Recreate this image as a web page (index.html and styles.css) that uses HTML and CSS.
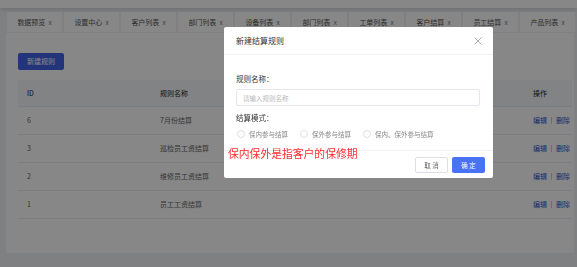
FILE: index.html
```html
<!DOCTYPE html>
<html lang="zh-CN">
<head>
    <meta charset="UTF-8">
    <meta name="viewport" content="width=device-width, initial-scale=1.0">
    <title>结算规则</title>
    <link rel="stylesheet" href="styles.css">
</head>
<body>
    <div class="topbar"></div>

    <div class="tabs">
        <div class="tab">数据预览 <span class="tab-x">x</span></div>
        <div class="tab">设置中心 <span class="tab-x">x</span></div>
        <div class="tab">客户列表 <span class="tab-x">x</span></div>
        <div class="tab">部门列表 <span class="tab-x">x</span></div>
        <div class="tab">设备列表 <span class="tab-x">x</span></div>
        <div class="tab">部门列表 <span class="tab-x">x</span></div>
        <div class="tab">工单列表 <span class="tab-x">x</span></div>
        <div class="tab">客户结算 <span class="tab-x">x</span></div>
        <div class="tab">员工结算 <span class="tab-x">x</span></div>
        <div class="tab">产品列表 <span class="tab-x">x</span></div>
    </div>

    <div class="panel">
        <button class="btn-primary">新建规则</button>

        <div class="table">
            <div class="row head">
                <div class="cell">ID</div>
                <div class="cell">规则名称</div>
                <div class="cell">操作</div>
            </div>
            <div class="row">
                <div class="cell">6</div>
                <div class="cell">7月份结算</div>
                <div class="cell ops"><a>编辑</a><span class="sep"></span><a>删除</a></div>
            </div>
            <div class="row">
                <div class="cell">3</div>
                <div class="cell">巡检员工资结算</div>
                <div class="cell ops"><a>编辑</a><span class="sep"></span><a>删除</a></div>
            </div>
            <div class="row">
                <div class="cell">2</div>
                <div class="cell">维修员工资结算</div>
                <div class="cell ops"><a>编辑</a><span class="sep"></span><a>删除</a></div>
            </div>
            <div class="row">
                <div class="cell">1</div>
                <div class="cell">员工工资结算</div>
                <div class="cell ops"><a>编辑</a><span class="sep"></span><a>删除</a></div>
            </div>
        </div>
    </div>

    <div class="mask"></div>

    <div class="modal">
        <div class="modal-header">
            <span class="modal-title">新建结算规则</span>
            <svg class="modal-close" width="8" height="8" viewBox="0 0 8 8">
                <path d="M0.5 0.5 L7.5 7.5 M7.5 0.5 L0.5 7.5" stroke="#999" stroke-width="0.8" fill="none"/>
            </svg>
        </div>
        <div class="modal-body">
            <div class="form-label">规则名称：</div>
            <input class="form-input" type="text" placeholder="请输入规则名称">
            <div class="form-label second">结算模式：</div>
            <div class="radios">
                <label class="radio"><span class="radio-dot"></span>保内参与结算</label>
                <label class="radio"><span class="radio-dot"></span>保外参与结算</label>
                <label class="radio"><span class="radio-dot"></span>保内、保外参与结算</label>
            </div>
        </div>
        <div class="modal-footer">
            <button class="btn-default">取 消</button>
            <button class="btn-ok">确 定</button>
        </div>
    </div>

    <div class="note">保内保外是指客户的保修期</div>
</body>
</html>
```

FILE: styles.css
```css
body {
    margin: 0;
    padding: 0;
    background-color: #f0f1f4;
    font-family: "Noto Sans CJK SC", "Noto Sans", sans-serif;
    color: #333;
    width: 577px;
    height: 267px;
    overflow: hidden;
}

.topbar {
    height: 8px;
    background-color: #fff;
    box-shadow: 0 2px 4px rgba(0, 0, 0, 0.12);
}

.tabs {
    display: flex;
    gap: 2px;
    margin-top: 4px;
    padding-left: 7px;
}

.tab {
    width: 55px;
    height: 20px;
    flex-shrink: 0;
    background-color: #fff;
    display: flex;
    align-items: center;
    justify-content: center;
    font-size: 7px;
    color: #555;
    gap: 3px;
}

.tab-x {
    font-family: "Liberation Sans", sans-serif;
    font-size: 6.5px;
    color: #777;
}

.panel {
    margin: 1px 3px 0 6px;
    height: 220px;
    background-color: #fff;
    padding: 12px 2px 0 12px;
    box-sizing: border-box;
}

.btn-primary {
    width: 46px;
    height: 17px;
    border: none;
    border-radius: 2px;
    background-color: #4463e6;
    color: #fff;
    font-family: inherit;
    font-size: 7px;
    padding: 0;
}

.table {
    margin-top: 10px;
}

.row {
    display: grid;
    grid-template-columns: 142px 1fr 39px;
    height: 28px;
    align-items: center;
    border-bottom: 1px solid #ebedf2;
    box-sizing: border-box;
    font-size: 7px;
    color: #666;
}

.row.head {
    height: 27px;
    background-color: #f6f7f9;
    color: #222;
}

.row .cell:first-child {
    padding-left: 9px;
}

.ops {
    display: flex;
    align-items: center;
}

.ops a {
    color: #2f4fd0;
}

.sep {
    width: 1px;
    height: 7px;
    background-color: #ccd;
    margin: 0 4px;
}

.mask {
    position: fixed;
    inset: 0;
    background-color: rgba(0, 0, 0, 0.47);
}

.modal {
    position: absolute;
    left: 224px;
    top: 27px;
    width: 269px;
    height: 151px;
    background-color: #fff;
    border-radius: 2px;
    display: flex;
    flex-direction: column;
}

.modal-header {
    height: 27px;
    border-bottom: 1px solid #eef0f3;
    display: flex;
    align-items: center;
    justify-content: space-between;
    padding: 0 11px 0 12px;
    box-sizing: content-box;
}

.modal-title {
    font-size: 8px;
    color: #333;
}

.modal-body {
    flex: 1;
    padding: 18px 13px 0 12px;
}

.form-label {
    font-size: 7.5px;
    line-height: 12px;
    color: #333;
}

.form-label.second {
    margin-top: 6px;
}

.form-input {
    display: block;
    width: 100%;
    height: 17px;
    margin-top: 4px;
    box-sizing: border-box;
    border: 1px solid #e4e6eb;
    border-radius: 2px;
    padding: 0 6px;
    font-family: inherit;
    font-size: 6.5px;
    outline: none;
}

.form-input::placeholder {
    color: #b8b8b8;
}

.radios {
    display: flex;
    gap: 11px;
    margin-top: 4px;
    height: 12px;
    align-items: center;
}

.radio {
    display: flex;
    align-items: center;
    gap: 4px;
    font-size: 6.5px;
    color: #888;
}

.radio-dot {
    width: 8px;
    height: 8px;
    border: 1px solid #dcdfe6;
    border-radius: 50%;
    box-sizing: border-box;
    margin-left: 1px;
}

.modal-footer {
    height: 27px;
    border-top: 1px solid #eef0f3;
    display: flex;
    justify-content: flex-end;
    align-items: center;
    gap: 4px;
    padding-right: 8px;
}

.btn-default, .btn-ok {
    width: 33px;
    height: 16px;
    border-radius: 2px;
    font-family: inherit;
    font-size: 6.5px;
    padding: 0;
}

.btn-default {
    border: 1px solid #dcdfe6;
    background-color: #fff;
    color: #666;
}

.btn-ok {
    border: none;
    background-color: #4a72f5;
    color: #fff;
}

.note {
    position: absolute;
    left: 228px;
    top: 145px;
    font-size: 10.8px;
    color: #ff2b2b;
    white-space: nowrap;
}
```
